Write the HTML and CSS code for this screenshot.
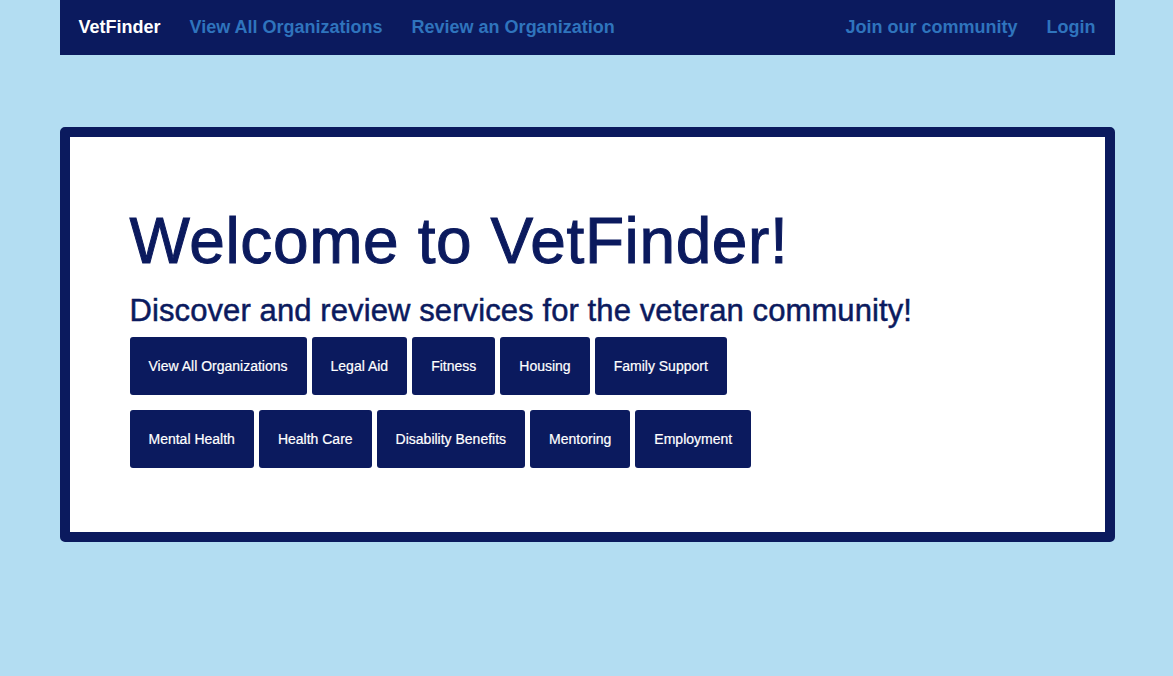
FILE: index.html
```html
<!DOCTYPE html>
<html>
<head>
<meta charset="utf-8">
<link rel="stylesheet" href="styles.css">
</head>
<body>
<div class="page">
  <nav class="navbar">
    <div class="nav-left">
      <a class="brand">VetFinder</a>
      <a class="nav-link">View All Organizations</a>
      <a class="nav-link">Review an Organization</a>
    </div>
    <div class="nav-right">
      <a class="nav-link">Join our community</a>
      <a class="nav-link">Login</a>
    </div>
  </nav>
  <section class="card">
    <h1 class="title">Welcome to VetFinder!</h1>
    <h2 class="subtitle">Discover and review services for the veteran community!</h2>
    <div class="btn-row">
      <a class="btn">View All Organizations</a>
      <a class="btn">Legal Aid</a>
      <a class="btn">Fitness</a>
      <a class="btn">Housing</a>
      <a class="btn">Family Support</a>
    </div>
    <div class="btn-row">
      <a class="btn">Mental Health</a>
      <a class="btn">Health Care</a>
      <a class="btn">Disability Benefits</a>
      <a class="btn">Mentoring</a>
      <a class="btn">Employment</a>
    </div>
  </section>
</div>
</body>
</html>
```

FILE: styles.css
```css
html, body {
  margin: 0;
  padding: 0;
  background: #b3ddf2;
  font-family: "Liberation Sans", Arial, sans-serif;
}
.page {
  width: 1055px;
  margin: 0 auto;
  padding-left: 1px;
}
.navbar {
  height: 55px;
  background: #0b1a5e;
  display: flex;
  justify-content: space-between;
  align-items: center;
  padding: 0 19px;
  box-sizing: border-box;
}
.nav-left, .nav-right {
  display: flex;
  align-items: center;
  gap: 29px;
}
.brand {
  color: #ffffff;
  font-weight: bold;
  font-size: 18px;
}
.nav-link {
  color: #2f74bd;
  font-weight: bold;
  font-size: 18px;
}
.card {
  margin-top: 72px;
  background: #ffffff;
  border: 10px solid #0b1a5e;
  border-radius: 5px;
  padding: 62px 60px 64px 60px;
}
.title {
  margin: 0;
  color: #0b1a5e;
  font-size: 64px;
  font-weight: normal;
  letter-spacing: 0.6px;
  line-height: 84px;
  -webkit-text-stroke: 1px #0b1a5e;
}
.subtitle {
  margin: 8px 0 6px 0;
  color: #0b1a5e;
  font-size: 31px;
  font-weight: normal;
  line-height: 40px;
  letter-spacing: 0.1px;
  -webkit-text-stroke: 0.5px #0b1a5e;
}
.btn-row {
  display: flex;
  gap: 5px;
  margin-bottom: 15px;
}
.btn-row:last-child {
  margin-bottom: 0;
}
.btn {
  display: inline-block;
  background: #0b1a5e;
  color: #ffffff;
  font-size: 14px;
  height: 58px;
  line-height: 58px;
  padding: 0 19px;
  border-radius: 3px;
  -webkit-text-stroke: 0.2px #ffffff;
}
```
